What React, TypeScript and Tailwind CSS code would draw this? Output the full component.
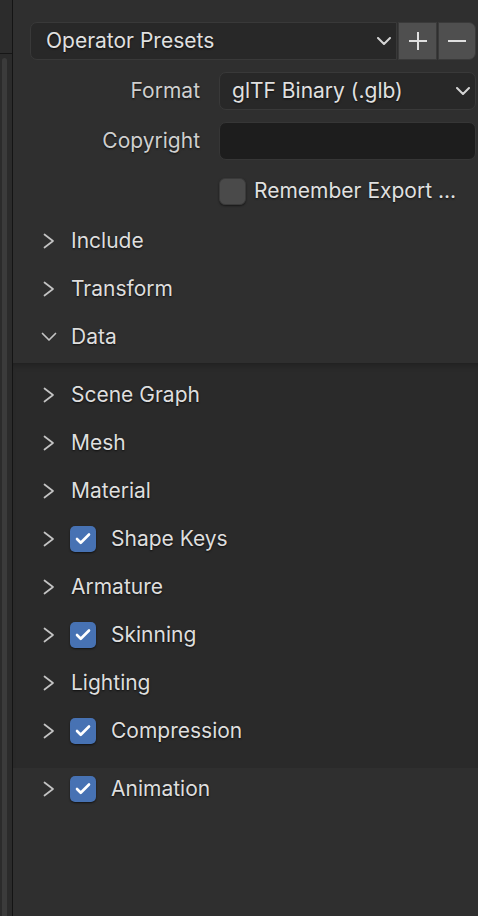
import { Check } from 'lucide-react'

const font = "font-['Inter','Noto_Sans',sans-serif]"
const shadow = '[text-shadow:0_1px_2px_rgba(0,0,0,0.7)]'

type Item = { label: string; checked?: boolean }

const dataItems: Item[] = [
  { label: 'Scene Graph' },
  { label: 'Mesh' },
  { label: 'Material' },
  { label: 'Shape Keys', checked: true },
  { label: 'Armature' },
  { label: 'Skinning', checked: true },
  { label: 'Lighting' },
  { label: 'Compression', checked: true },
]

function Arrow({ open }: { open?: boolean }) {
  if (open) {
    return (
      <svg width="16" height="10" viewBox="0 0 16 10" className="text-[#c4c4c4]">
        <path d="M1.5 1.5 L8 8 L14.5 1.5" fill="none" stroke="currentColor" strokeWidth="1.7" strokeLinecap="round" strokeLinejoin="round" />
      </svg>
    )
  }
  return (
    <svg width="12" height="16" viewBox="0 0 12 16" className="text-[#c4c4c4]">
      <path d="M1.5 1.5 L10 8 L1.5 14.5" fill="none" stroke="currentColor" strokeWidth="1.7" strokeLinecap="round" strokeLinejoin="round" />
    </svg>
  )
}

function DropChevron() {
  return (
    <svg width="14" height="8" viewBox="0 0 14 8" className="text-[#d4d4d4]">
      <path d="M1 1 L7 7 L13 1" fill="none" stroke="currentColor" strokeWidth="2" strokeLinecap="round" strokeLinejoin="round" />
    </svg>
  )
}

function BlueCheck() {
  return (
    <div className="w-[26px] h-[26px] rounded-[5px] bg-[#4772b3] flex items-center justify-center shadow-[0_1px_2px_rgba(0,0,0,0.6)]">
      <Check size={18} strokeWidth={3.5} className="text-white" />
    </div>
  )
}

function PanelRow({ label, checked, open, h = 'h-[48px]' }: Item & { open?: boolean; h?: string }) {
  return (
    <div className={`flex items-center ${h} pl-[27px]`}>
      <div className="w-[18px] flex items-center justify-center">
        <Arrow open={open} />
      </div>
      {checked ? (
        <div className="flex items-center ml-[12px]">
          <BlueCheck />
          <span className={`ml-[15px] text-[21px] text-[#dedede] ${shadow}`}>{label}</span>
        </div>
      ) : (
        <span className={`ml-[13px] text-[21px] text-[#dedede] ${shadow}`}>{label}</span>
      )}
    </div>
  )
}

export default function App() {
  return (
    <div className={`flex w-[478px] h-[916px] bg-[#2f2f2f] overflow-hidden ${font}`}>
      {/* left strip / scrollbar */}
      <div className="w-[13px] flex flex-col border-r border-[#141414] bg-[#2b2b2b]">
        <div className="h-[54px] border-b border-[#161616] bg-[#2c2c2c]" />
        <div className="flex-1 flex pl-[2px] pt-[4px]">
          <div className="w-[5px] h-full rounded-t-[3px] bg-[#3b3b3b]" />
        </div>
      </div>

      <div className="flex-1 flex flex-col">
        <div className="flex flex-col gap-[12px] pt-[22px] pr-[2px]">
          {/* operator presets */}
          <div className="flex h-[38px] ml-[17px]">
            <div className="flex-1 flex items-center justify-between rounded-l-[7px] bg-[#282828] border border-[#393939] pl-[15px] pr-[5px]">
              <span className={`text-[21px] text-[#e0e0e0] ${shadow}`}>Operator Presets</span>
              <DropChevron />
            </div>
            <div className="w-[39px] ml-[1px] flex items-center justify-center bg-[#4f4f4f] border border-[#3a3a3a]">
              <svg width="20" height="20" viewBox="0 0 20 20" className="text-[#e0e0e0]">
                <path d="M10 1 V19 M1 10 H19" stroke="currentColor" strokeWidth="2" />
              </svg>
            </div>
            <div className="w-[38px] ml-[1px] flex items-center justify-center rounded-r-[7px] bg-[#4f4f4f] border border-[#3a3a3a]">
              <svg width="20" height="20" viewBox="0 0 20 20" className="text-[#e0e0e0]">
                <path d="M1 10 H19" stroke="currentColor" strokeWidth="2" />
              </svg>
            </div>
          </div>

          {/* format */}
          <div className="flex h-[38px]">
            <div className={`w-[206px] flex items-center justify-end pr-[19px] text-[21px] text-[#cfcfcf] ${shadow}`}>
              Format
            </div>
            <div className="flex-1 flex items-center justify-between rounded-[7px] bg-[#282828] border border-[#393939] pl-[12px] pr-[5px]">
              <span className={`text-[21px] text-[#e0e0e0] ${shadow}`}>glTF Binary (.glb)</span>
              <DropChevron />
            </div>
          </div>

          {/* copyright */}
          <div className="flex h-[38px]">
            <div className={`w-[206px] flex items-center justify-end pr-[19px] text-[21px] text-[#cfcfcf] ${shadow}`}>
              Copyright
            </div>
            <div className="flex-1 rounded-[7px] bg-[#1d1d1d] border border-[#363636]" />
          </div>

          {/* remember */}
          <div className="flex h-[38px] items-center">
            <div className="w-[206px]" />
            <div className="w-[27px] h-[27px] rounded-[6px] bg-[#4a4a4a] border border-[#3a3a3a] shadow-[0_1px_2px_rgba(0,0,0,0.5)]" />
            <span className={`ml-[8px] text-[21px] text-[#e0e0e0] ${shadow}`}>Remember Export ...</span>
          </div>
        </div>

        {/* panels */}
        <div className="mt-[7px] flex flex-col">
          <PanelRow label="Include" />
          <PanelRow label="Transform" />
          <PanelRow label="Data" open />
          <div className="mt-[2px] pt-[8px] pb-[13px] bg-[#2a2a2a] shadow-[inset_0_6px_6px_-4px_rgba(0,0,0,0.25)]">
            {dataItems.map((item) => (
              <PanelRow key={item.label} {...item} />
            ))}
          </div>
          <PanelRow label="Animation" checked h="h-[42px]" />
        </div>
      </div>
    </div>
  )
}
